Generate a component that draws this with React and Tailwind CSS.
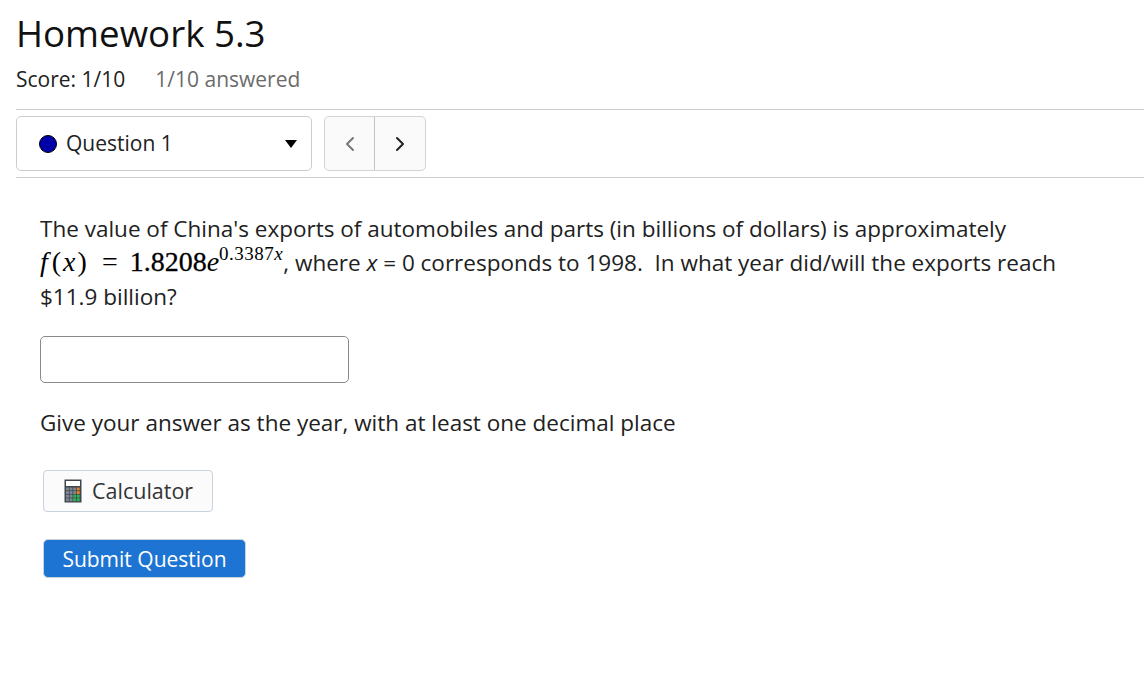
import { ChevronLeft, ChevronRight } from "lucide-react";

const sans = { fontFamily: '"Open Sans", sans-serif' };

function CalculatorIcon() {
  const keys = [
    "#7d8792", "#7d8792", "#7d8792", "#e8802c",
    "#7d8792", "#7d8792", "#7d8792", "#e8802c",
    "#7d8792", "#7d8792", "#2fb35a", "#2fb35a",
    "#7d8792", "#7d8792", "#2fb35a", "#2fb35a",
  ];
  return (
    <svg width="18" height="24" viewBox="0 0 18 24">
      <rect x="0.5" y="0.5" width="17" height="23" fill="#3f454c" />
      <rect x="2" y="2" width="14" height="5" fill="#ffffff" />
      {keys.map((c, i) => (
        <rect
          key={i}
          x={2 + (i % 4) * 3.6}
          y={8.5 + Math.floor(i / 4) * 3.6}
          width="2.9"
          height="2.9"
          fill={c}
        />
      ))}
    </svg>
  );
}

function Formula() {
  return (
    <span className="font-['Liberation_Serif',serif] text-[28px] leading-none text-black">
      <i className="mr-[4px]">f</i>
      <span className="mr-[2px]">(</span>
      <i className="mr-[2px]">x</i>
      <span className="mr-[3px]">)</span>
      <span className="mx-[12px]">=</span>
      <span className="[-webkit-text-stroke:0.3px_black]">1.8208</span>
      <i>e</i>
      <sup className="text-[19px] leading-none top-[-11px] tracking-[0.5px]">
        0.3387<i>x</i>
      </sup>
    </span>
  );
}

export default function App() {
  return (
    <div className="bg-white min-h-[700px] pl-4 text-[#212121]" style={sans}>
      <h1 className="text-[36.7px] leading-[50px] pt-[8px] text-[#111]">Homework 5.3</h1>

      <div className="flex gap-[30px] mt-[8px] text-[21px] leading-[27px]">
        <span>Score: 1/10</span>
        <span className="text-[#6b6b6b]">1/10 answered</span>
      </div>

      <div className="mt-[16px] border-y border-[#cfcfcf] py-[6px] flex gap-3">
        <div className="w-[296px] h-[55px] border border-[#ccc] rounded-[5px] flex items-center pl-[22px] pr-[14px]">
          <span className="w-[18px] h-[18px] rounded-full bg-[#0000a8] border border-black" />
          <span className="ml-[9px] text-[21px]">Question 1</span>
          <span className="ml-auto w-0 h-0 border-x-[6px] border-x-transparent border-t-[8px] border-t-black" />
        </div>
        <div className="flex h-[55px] w-[102px] border border-[#d4d4d4] rounded-[5px] bg-[#fafafa]">
          <div className="w-[50px] border-r border-[#c4c4c4] flex items-center justify-center text-[#777]">
            <ChevronLeft size={24} strokeWidth={2} />
          </div>
          <div className="flex-1 flex items-center justify-center text-[#222]">
            <ChevronRight size={24} strokeWidth={2} />
          </div>
        </div>
      </div>

      <div className="pl-6 pt-[34px] pr-[60px] text-[22.5px] leading-[34px]">
        <p>
          The value of China's exports of automobiles and parts (in billions of dollars) is approximately{" "}
          <Formula />, where <i>x</i> = 0 corresponds to 1998.&nbsp; In what year did/will the exports reach $11.9
          billion?
        </p>

        <input
          aria-label="Answer"
          className="block mt-[22px] w-[309px] h-[47px] border border-[#8a8a8a] rounded-[5px] bg-white"
        />

        <p className="mt-[23px]">Give your answer as the year, with at least one decimal place</p>

        <button className="mt-[30px] ml-[3px] flex items-center gap-[10px] h-[42px] w-[170px] pl-[20px] border border-[#c9d3de] rounded-[4px] bg-[#fbfbfc] text-[#333] text-[21.5px]">
          <CalculatorIcon />
          Calculator
        </button>

        <button className="block mt-[27px] ml-[3px] h-[39px] w-[203px] rounded-[5px] bg-[#1d74d3] border border-[#c9d3de] text-white text-[21px] leading-[34px]">
          Submit Question
        </button>
      </div>
    </div>
  );
}
